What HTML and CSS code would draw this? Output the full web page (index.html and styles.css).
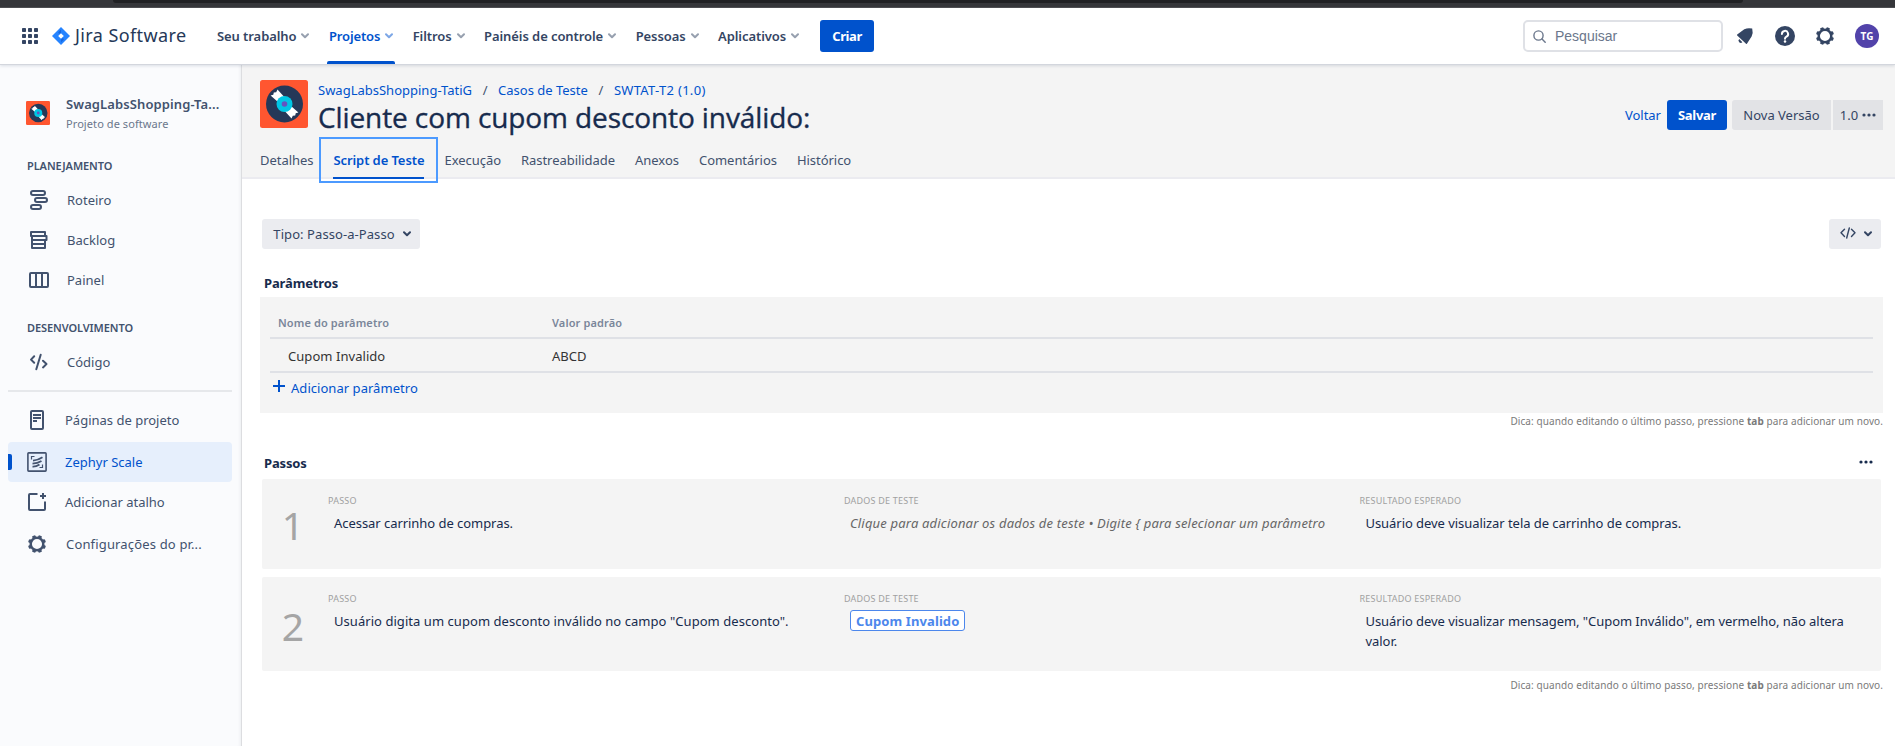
FILE: index.html
```
<!DOCTYPE html>
<html lang="pt-BR">
<head>
<meta charset="utf-8">
<title>Cliente com cupom desconto inválido - Jira</title>
<link rel="stylesheet" href="styles.css">
</head>
<body>
<svg class="defs" aria-hidden="true">
  <symbol id="chev" viewBox="0 0 8 6"><path d="M1 1.2l3 3 3-3" fill="none" stroke="currentColor" stroke-width="2" stroke-linecap="round" stroke-linejoin="round"/></symbol>
  <symbol id="dots" viewBox="0 0 14 4"><g fill="currentColor"><circle cx="2" cy="2" r="1.6"/><circle cx="7" cy="2" r="1.6"/><circle cx="12" cy="2" r="1.6"/></g></symbol>
  <symbol id="gear" viewBox="0 0 18 18"><circle cx="9" cy="9" r="6.300" fill="none" stroke="currentColor" stroke-width="2.500"/><g fill="currentColor"><rect x="7.200" y="0" width="3.600" height="3" rx="1" transform="rotate(22.5 9 9)"/><rect x="7.200" y="0" width="3.600" height="3" rx="1" transform="rotate(67.5 9 9)"/><rect x="7.200" y="0" width="3.600" height="3" rx="1" transform="rotate(112.5 9 9)"/><rect x="7.200" y="0" width="3.600" height="3" rx="1" transform="rotate(157.5 9 9)"/><rect x="7.200" y="0" width="3.600" height="3" rx="1" transform="rotate(202.5 9 9)"/><rect x="7.200" y="0" width="3.600" height="3" rx="1" transform="rotate(247.5 9 9)"/><rect x="7.200" y="0" width="3.600" height="3" rx="1" transform="rotate(292.5 9 9)"/><rect x="7.200" y="0" width="3.600" height="3" rx="1" transform="rotate(337.5 9 9)"/></g></symbol>
  <symbol id="disc" viewBox="0 0 48 48"><rect width="48" height="48" rx="2.5" fill="#ff5630"/><circle cx="24.500" cy="24" r="18.500" fill="#253858"/><path d="M22 25.500L10.600 15.600l2.700-.9.500-2.300 2.400-.2 1.300-2.600L27 20z" fill="#fff"/><path d="M27 22.500L38.400 32.400l-2.700.9-.5 2.300-2.400.2-1.300 2.600L22 28z" fill="#fff"/><circle cx="24.500" cy="24" r="8" fill="#00c7e5"/><circle cx="24.500" cy="24" r="2.800" fill="#6554c0"/></symbol>
</svg>

<div class="browser-edge"><div class="omnibox"></div></div>

<header class="topbar">
  <svg class="apps" viewBox="0 0 16 16" fill="#344563"><rect width="4" height="4" rx=".8"/><rect x="6" width="4" height="4" rx=".8"/><rect x="12" width="4" height="4" rx=".8"/><rect y="6" width="4" height="4" rx=".8"/><rect x="6" y="6" width="4" height="4" rx=".8"/><rect x="12" y="6" width="4" height="4" rx=".8"/><rect y="12" width="4" height="4" rx=".8"/><rect x="6" y="12" width="4" height="4" rx=".8"/><rect x="12" y="12" width="4" height="4" rx=".8"/></svg>
  <svg class="jira-mark" viewBox="0 0 18 18"><path d="M9 0l9 9-9 9-9-9z" fill="#2684ff"/><path d="M9 2.500L6.200 5.300c.2 1.200 1.400 1.800 2.800.900z" fill="#1868e0"/><path d="M9 15.500l2.800-2.800c-.2-1.200-1.400-1.800-2.800-.900z" fill="#1868e0"/><path d="M9 6.200L11.800 9 9 11.800 6.200 9z" fill="#fff"/></svg>
  <span class="jira-name">Jira Software</span>
  <nav class="menu">
    <a class="menu-item">Seu trabalho<svg class="chev"><use href="#chev"/></svg></a>
    <a class="menu-item active">Projetos<svg class="chev"><use href="#chev"/></svg></a>
    <a class="menu-item">Filtros<svg class="chev"><use href="#chev"/></svg></a>
    <a class="menu-item">Painéis de controle<svg class="chev"><use href="#chev"/></svg></a>
    <a class="menu-item">Pessoas<svg class="chev"><use href="#chev"/></svg></a>
    <a class="menu-item">Aplicativos<svg class="chev"><use href="#chev"/></svg></a>
  </nav>
  <button class="create">Criar</button>
  <div class="search">
    <svg width="13" height="13" viewBox="0 0 13 13" fill="none" stroke="#6b778c" stroke-width="1.4" stroke-linecap="round"><circle cx="5.500" cy="5.500" r="4.600"/><path d="M9 9l3.200 3.200"/></svg>
    <span>Pesquisar</span>
  </div>
  <div class="tools">
    <svg class="bell" width="18" height="18" viewBox="0 0 18 18" fill="#344563"><path d="M1.200 7.600L8.300 2.200Q12 .6 16.200 1.600Q17.400 6 15.600 9.600L10.900 16.800Q10.400 17.300 10 16.800L1.200 8.500Q.8 8 1.200 7.600z"/><path d="M3.200 12.100l3.200 3.200a2.200 2.200 0 0 1-3.200-3.200z"/></svg>
    <svg class="help" width="20" height="20" viewBox="0 0 20 20"><circle cx="10" cy="10" r="10" fill="#344563"/><path d="M6.900 8a3.100 3.100 0 1 1 4.600 2.700c-.9.500-1.500.9-1.500 2" fill="none" stroke="#fff" stroke-width="2" stroke-linecap="round"/><circle cx="10" cy="15.600" r="1.250" fill="#fff"/></svg>
    <svg class="gear" width="18" height="18"><use href="#gear"/></svg>
    <span class="avatar">TG</span>
  </div>
</header>

<div class="body">
  <aside class="sidebar">
    <div class="project">
      <svg width="24" height="24"><use href="#disc"/></svg>
      <div><div class="project-name">SwagLabsShopping-Ta...</div><div class="project-kind">Projeto de software</div></div>
    </div>
    <h2 class="group first">PLANEJAMENTO</h2>
    <a class="link"><svg class="ic" viewBox="0 0 20 20" fill="none" stroke="#42526e" stroke-width="2"><rect x="2" y="1" width="14" height="4" rx="2"/><rect x="6" y="8" width="12" height="4" rx="2"/><rect x="2" y="15" width="10" height="4" rx="2"/></svg>Roteiro</a>
    <a class="link"><svg class="ic" viewBox="0 0 20 20" fill="none" stroke="#42526e" stroke-width="2" stroke-linejoin="round"><path d="M16 5V2H2v4h15.500v4H3M3 6v12h13v-8M3 14h13"/></svg>Backlog</a>
    <a class="link"><svg class="ic" viewBox="0 0 20 20" fill="none" stroke="#42526e" stroke-width="2"><rect x="1" y="3" width="18" height="14" rx="1"/><path d="M7 3v14M13 3v14"/></svg>Painel</a>
    <h2 class="group second">DESENVOLVIMENTO</h2>
    <a class="link code"><svg class="ic" viewBox="0 0 20 20" fill="none" stroke="#42526e" stroke-width="2" stroke-linecap="round" stroke-linejoin="round"><path d="M5.200 4.200L2 7.600l3.200 3.200M14 8.800l3.500 3.300-3.500 3.300M11.700 2.800L7.300 17.200"/></svg>Código</a>
    <hr class="rule">
    <a class="link low"><svg class="ic" viewBox="0 0 20 20" fill="none" stroke="#42526e" stroke-width="2"><rect x="4" y="1" width="12" height="18" rx="1"/><path d="M6 5h8M6 8h8M6 11h4"/></svg>Páginas de projeto</a>
    <a class="link low selected"><svg class="ic" viewBox="0 0 20 20" fill="none" stroke="#42526e"><rect x=".9" y=".9" width="18.200" height="18.200" rx=".8" stroke-width="1.600"/><path d="M4.500 7.500V4.500H7.500M15.500 12.500v3H12.500" stroke-width="1.200"/><path d="M6 8.600q5-.4 9.500-3.400M5.500 11.600q5 0 9-2.500M5.500 14.600q3.500.2 7-2.200" stroke-width="1.800"/></svg>Zephyr Scale</a>
    <a class="link low"><svg class="ic" viewBox="0 0 20 20" fill="none" stroke="#42526e" stroke-width="2"><path d="M10.500 2H3a1 1 0 0 0-1 1v14a1 1 0 0 0 1 1h14a1 1 0 0 0 1-1V9.500"/><path d="M16 1v6M13 4h6"/></svg>Adicionar atalho</a>
    <a class="link low config"><svg class="ic" viewBox="-1 -1 20 20" color="#42526e"><use href="#gear" width="18" height="18"/></svg>Configurações do pr...</a>
  </aside>

  <main class="main">
    <section class="head">
      <div class="head-row">
        <svg width="48" height="48"><use href="#disc"/></svg>
        <div class="head-text">
          <div class="crumbs"><a>SwagLabsShopping-TatiG</a><span>/</span><a>Casos de Teste</a><span>/</span><a class="key">SWTAT-T2 (1.0)</a></div>
          <h1 class="title">Cliente com cupom desconto inválido:</h1>
        </div>
        <div class="actions">
          <a class="back">Voltar</a>
          <button class="save">Salvar</button>
          <button class="grey version">Nova Versão</button>
          <button class="grey more">1.0<svg width="14" height="4"><use href="#dots"/></svg></button>
        </div>
      </div>
      <nav class="tabs">
        <a class="tab">Detalhes</a>
        <a class="tab current"><span>Script de Teste</span></a>
        <a class="tab">Execução</a>
        <a class="tab">Rastreabilidade</a>
        <a class="tab">Anexos</a>
        <a class="tab">Comentários</a>
        <a class="tab">Histórico</a>
      </nav>
    </section>

    <section class="content">
      <div class="bar">
        <button class="select">Tipo: Passo-a-Passo<svg class="chev"><use href="#chev"/></svg></button>
        <button class="select code-btn"><svg class="code-mark" width="16" height="12" viewBox="0 0 16 12" fill="none" stroke="#344563" stroke-width="1.400" stroke-linecap="round" stroke-linejoin="round"><path d="M4.500 2.200L1 5.800l3.500 3.600M11.500 2.200L15 5.800l-3.500 3.600M9.300 1L6.700 11"/></svg><svg class="chev"><use href="#chev"/></svg></button>
      </div>

      <h3 class="heading">Parâmetros</h3>
      <div class="params">
        <div class="prow phead"><span>Nome do parâmetro</span><span>Valor padrão</span></div>
        <div class="prow pdata"><span>Cupom Invalido</span><span>ABCD</span></div>
        <a class="add"><svg width="12" height="12" viewBox="0 0 12 12" stroke="#0052cc" stroke-width="2"><path d="M6 0v12M0 6h12"/></svg>Adicionar parâmetro</a>
      </div>
      <p class="hint">Dica: quando editando o último passo, pressione <b>tab</b> para adicionar um novo.</p>

      <div class="steps-head"><h3 class="heading">Passos</h3><svg width="14" height="4"><use href="#dots"/></svg></div>
      <div class="step one">
        <div class="num">1</div>
        <div class="cell"><div class="label">PASSO</div><div class="text">Acessar carrinho de compras.</div></div>
        <div class="cell"><div class="label">DADOS DE TESTE</div><div class="text empty">Clique para adicionar os dados de teste • Digite { para selecionar um parâmetro</div></div>
        <div class="cell"><div class="label">RESULTADO ESPERADO</div><div class="text result">Usuário deve visualizar tela de carrinho de compras.</div></div>
      </div>
      <div class="step two">
        <div class="num">2</div>
        <div class="cell"><div class="label">PASSO</div><div class="text long">Usuário digita um cupom desconto inválido no campo "Cupom desconto".</div></div>
        <div class="cell"><div class="label">DADOS DE TESTE</div><div class="text"><span class="chip">Cupom Invalido</span></div></div>
        <div class="cell"><div class="label">RESULTADO ESPERADO</div><div class="text result">Usuário deve visualizar mensagem, "Cupom Inválido", em vermelho, não altera valor.</div></div>
      </div>
      <p class="hint last">Dica: quando editando o último passo, pressione <b>tab</b> para adicionar um novo.</p>
    </section>
  </main>
</div>
</body>
</html>
```
FILE: styles.css
```
* { box-sizing: border-box; }
body {
  margin: 0;
  height: 746px;
  overflow: hidden;
  display: flex;
  flex-direction: column;
  background: #fff;
  font: 400 13px/20px "Noto Sans", "Open Sans", sans-serif;
  color: #172b4d;
}
h1, h2, h3, p { margin: 0; }
button { border: 0; padding: 0; font: inherit; color: inherit; white-space: nowrap; }
svg { display: block; flex: none; }
.defs { position: absolute; width: 0; height: 0; }

.browser-edge { flex: none; height: 8px; background: #35363a; border-bottom: 1px solid #4e4f53; }
.omnibox { height: 3px; margin: 0 152px 0 113px; background: #202124; border-radius: 0 0 8px 8px; }

.topbar {
  flex: none;
  height: 56px;
  display: flex;
  align-items: center;
  padding: 0 16px 0 22px;
  position: relative;
  z-index: 2;
  background: #fff;
  box-shadow: 0 1px 0 #d3d6dd, 0 2px 3px rgba(9, 30, 66, .13);
}
.apps { width: 16px; height: 16px; }
.jira-mark { width: 18px; height: 18px; margin-left: 14px; }
.jira-name { margin-left: 5px; width: 137px; font-size: 18px; letter-spacing: .4px; color: #253858; white-space: nowrap; padding-bottom: 2px; }
.menu { display: flex; gap: 19.5px; margin-left: 5px; height: 56px; }
.menu-item { display: flex; align-items: center; gap: 5px; font-weight: 600; color: #344563; letter-spacing: -.08px; white-space: nowrap; position: relative; }
.menu-item .chev { color: #97a0af; }
.menu-item.active { color: #0052cc; letter-spacing: -.15px; }
.menu-item.active .chev { color: #7da7e6; }
.menu-item.active::after { content: ""; position: absolute; left: -2px; right: -2px; bottom: 0; height: 3px; background: #0052cc; border-radius: 2px 2px 0 0; }
.chev { width: 8px; height: 6px; }
.create { margin-left: 21px; width: 54px; height: 32px; border-radius: 3px; background: #0052cc; color: #fff; font-weight: 700; letter-spacing: -.4px; }
.search { margin-left: auto; width: 200px; height: 32px; border: 2px solid #dfe1e6; border-radius: 5px; display: flex; align-items: center; padding-left: 8px; font: 14px/20px "Liberation Sans", Arial, sans-serif; color: #6b778c; }
.search span { margin-left: 9px; }
.tools { display: flex; align-items: center; margin-left: 13px; color: #344563; }
.help { margin-left: 21px; }
.gear { margin-left: 21px; }
.avatar { margin-left: 21px; width: 24px; height: 24px; border-radius: 50%; background: #5243aa; color: #fff; font-size: 10px; font-weight: 700; line-height: 24px; text-align: center; }

.body { flex: 1; display: flex; min-height: 0; }
.sidebar { flex: none; width: 242px; padding: 0 9px 0 8px; background: #fafbfd; border-right: 1px solid #dcdde0; box-shadow: inset -3px 0 3px -2px #eceef1; }
.project { display: flex; gap: 16px; align-items: center; margin: 30px 0 0 18px; height: 40px; }
.project > svg { margin-bottom: 2px; }
.project-name { font-weight: 600; letter-spacing: .1px; color: #42526e; white-space: nowrap; }
.project-kind { font-size: 11px; letter-spacing: .08px; color: #6b778c; }
.group { font-size: 11px; font-weight: 600; line-height: 16px; color: #42526e; margin-left: 19px; letter-spacing: -.08px; }
.group.first { margin-top: 24px; margin-bottom: 6px; }
.group.second { margin-top: 20px; margin-bottom: 6px; }
.link { display: flex; align-items: center; height: 40px; padding-left: 21px; gap: 18px; color: #42526e; white-space: nowrap; position: relative; }
.ic { width: 20px; height: 20px; }
.rule { height: 2px; border: 0; background: #e6e8eb; margin: 8px 0 8px; }
.low { padding-left: 19px; }
.selected { background: #e6effc; border-radius: 4px; color: #0052cc; margin-top: 2px; }
.selected::before { content: ""; position: absolute; left: 0; top: 12px; width: 4px; height: 16px; background: #0052cc; border-radius: 0 2px 2px 0; }
.config { margin-top: 2px; gap: 19px; letter-spacing: .16px; }

.main { flex: 1; min-width: 0; }
.head { height: 115px; background: #f4f4f4; border-bottom: 2px solid #ebebf0; padding: 16px 12px 0 18px; }
.head-row { display: flex; height: 57px; }
.head-text { margin: 0 0 0 10px; }
.crumbs { display: flex; height: 20px; color: #42526e; }
.crumbs a, .back { color: #0052cc; }
.crumbs span { width: 26px; text-align: center; }
.crumbs .key { letter-spacing: .3px; }
.title { font: 500 28px/32px "Open Sans", sans-serif; letter-spacing: -.1px; margin-top: 1px; white-space: nowrap; -webkit-text-stroke: .35px #172b4d; }
.actions { margin: 20px 0 0 auto; display: flex; height: 30px; line-height: 30px; color: #344563; }
.save { margin-left: 6px; width: 60px; border-radius: 3px; background: #0052cc; color: #fff; font-weight: 700; letter-spacing: -.3px; }
.grey { background: #e2e3e6; }
.version { margin-left: 5px; width: 99px; border-radius: 3px 0 0 3px; }
.more { margin-left: 2px; width: 50px; display: flex; align-items: center; justify-content: center; gap: 4px; }
.tabs { display: flex; color: #42526e; height: 46px; line-height: 46px; }
.tab { margin-right: 20px; letter-spacing: -.04px; }
.tab.current { border: 2px solid #4c9aff; width: 119px; margin: 0 6px 0 -14px; height: 46px; line-height: 42px; text-align: center; color: #0052cc; font-weight: 600; letter-spacing: -.09px; }
.tab.current span { display: block; margin: 0 12px; height: 42px; border-bottom: 2px solid #0052cc; height: 40px; }

.content { padding: 40px 12px 0 18px; }
.bar { display: flex; justify-content: space-between; padding: 0 2px; }
.select { width: 158px; height: 30px; background: #ebecf0; border-radius: 3px; display: flex; align-items: center; justify-content: center; gap: 8px; padding-left: 2px; color: #344563; letter-spacing: .07px; }
.code-btn { width: 52px; padding-left: 2px; }
.code-mark { margin-bottom: 2px; }
.heading { font-size: 13px; font-weight: 700; line-height: 20px; letter-spacing: -.14px; padding-left: 4px; }
.bar + .heading { margin-top: 24px; }
.params { margin-top: 4px; height: 116px; background: #f4f4f4; padding: 16px 10px 0; }
.prow { display: grid; grid-template-columns: 282px 1fr; border-bottom: 2px solid #dfe1e6; }
.phead { height: 26px; font-size: 11px; font-weight: 600; letter-spacing: .12px; color: #7a869a; padding-left: 8px; grid-template-columns: 274px 1fr; }
.pdata { height: 34px; padding-top: 7px; color: #333; letter-spacing: .05px; }
.pdata span:first-child { padding-left: 18px; }
.add { display: flex; gap: 6px; color: #0052cc; padding: 5px 0 0 3px; letter-spacing: .04px; }
.add svg { margin-top: 2px; }
.hint { text-align: right; font-size: 10px; line-height: 16px; letter-spacing: .1px; color: #7a7a7a; }
.steps-head { display: flex; justify-content: space-between; align-items: center; margin-top: 24px; padding-right: 10px; height: 20px; }
.steps-head svg { margin-bottom: 2px; }
.step { margin: 0 2px; display: grid; grid-template-columns: 66px 516px 515.5px 516px; background: #f4f4f4; border-radius: 2px; padding-top: 12px; }
.one { height: 90px; margin-top: 6px; }
.two { height: 94px; margin-top: 8px; }
.num { font-size: 39px; font-weight: 400; line-height: 40px; color: #a5a5a5; text-align: center; padding: 14px 4px 0 0; }
.two .num { padding-top: 17px; }
.label { font-size: 9px; line-height: 18px; padding-top: 1px; letter-spacing: .21px; color: #a0a0a0; }
.text { padding: 3px 26px 0 6px; letter-spacing: -.05px; }
.long { letter-spacing: .05px; padding-right: 0; }
.result { letter-spacing: -.055px; }
.empty { font-style: italic; letter-spacing: .18px; color: #666; padding-right: 0; white-space: nowrap; }
.chip { display: inline-block; height: 21px; line-height: 20px; border: 1px solid #4c87ec; border-radius: 3px; background: #fff; color: #4c87ec; font-weight: 700; letter-spacing: .1px; padding: 0 5px; margin-top: -1px; }
.last { margin-top: 6px; }
```
